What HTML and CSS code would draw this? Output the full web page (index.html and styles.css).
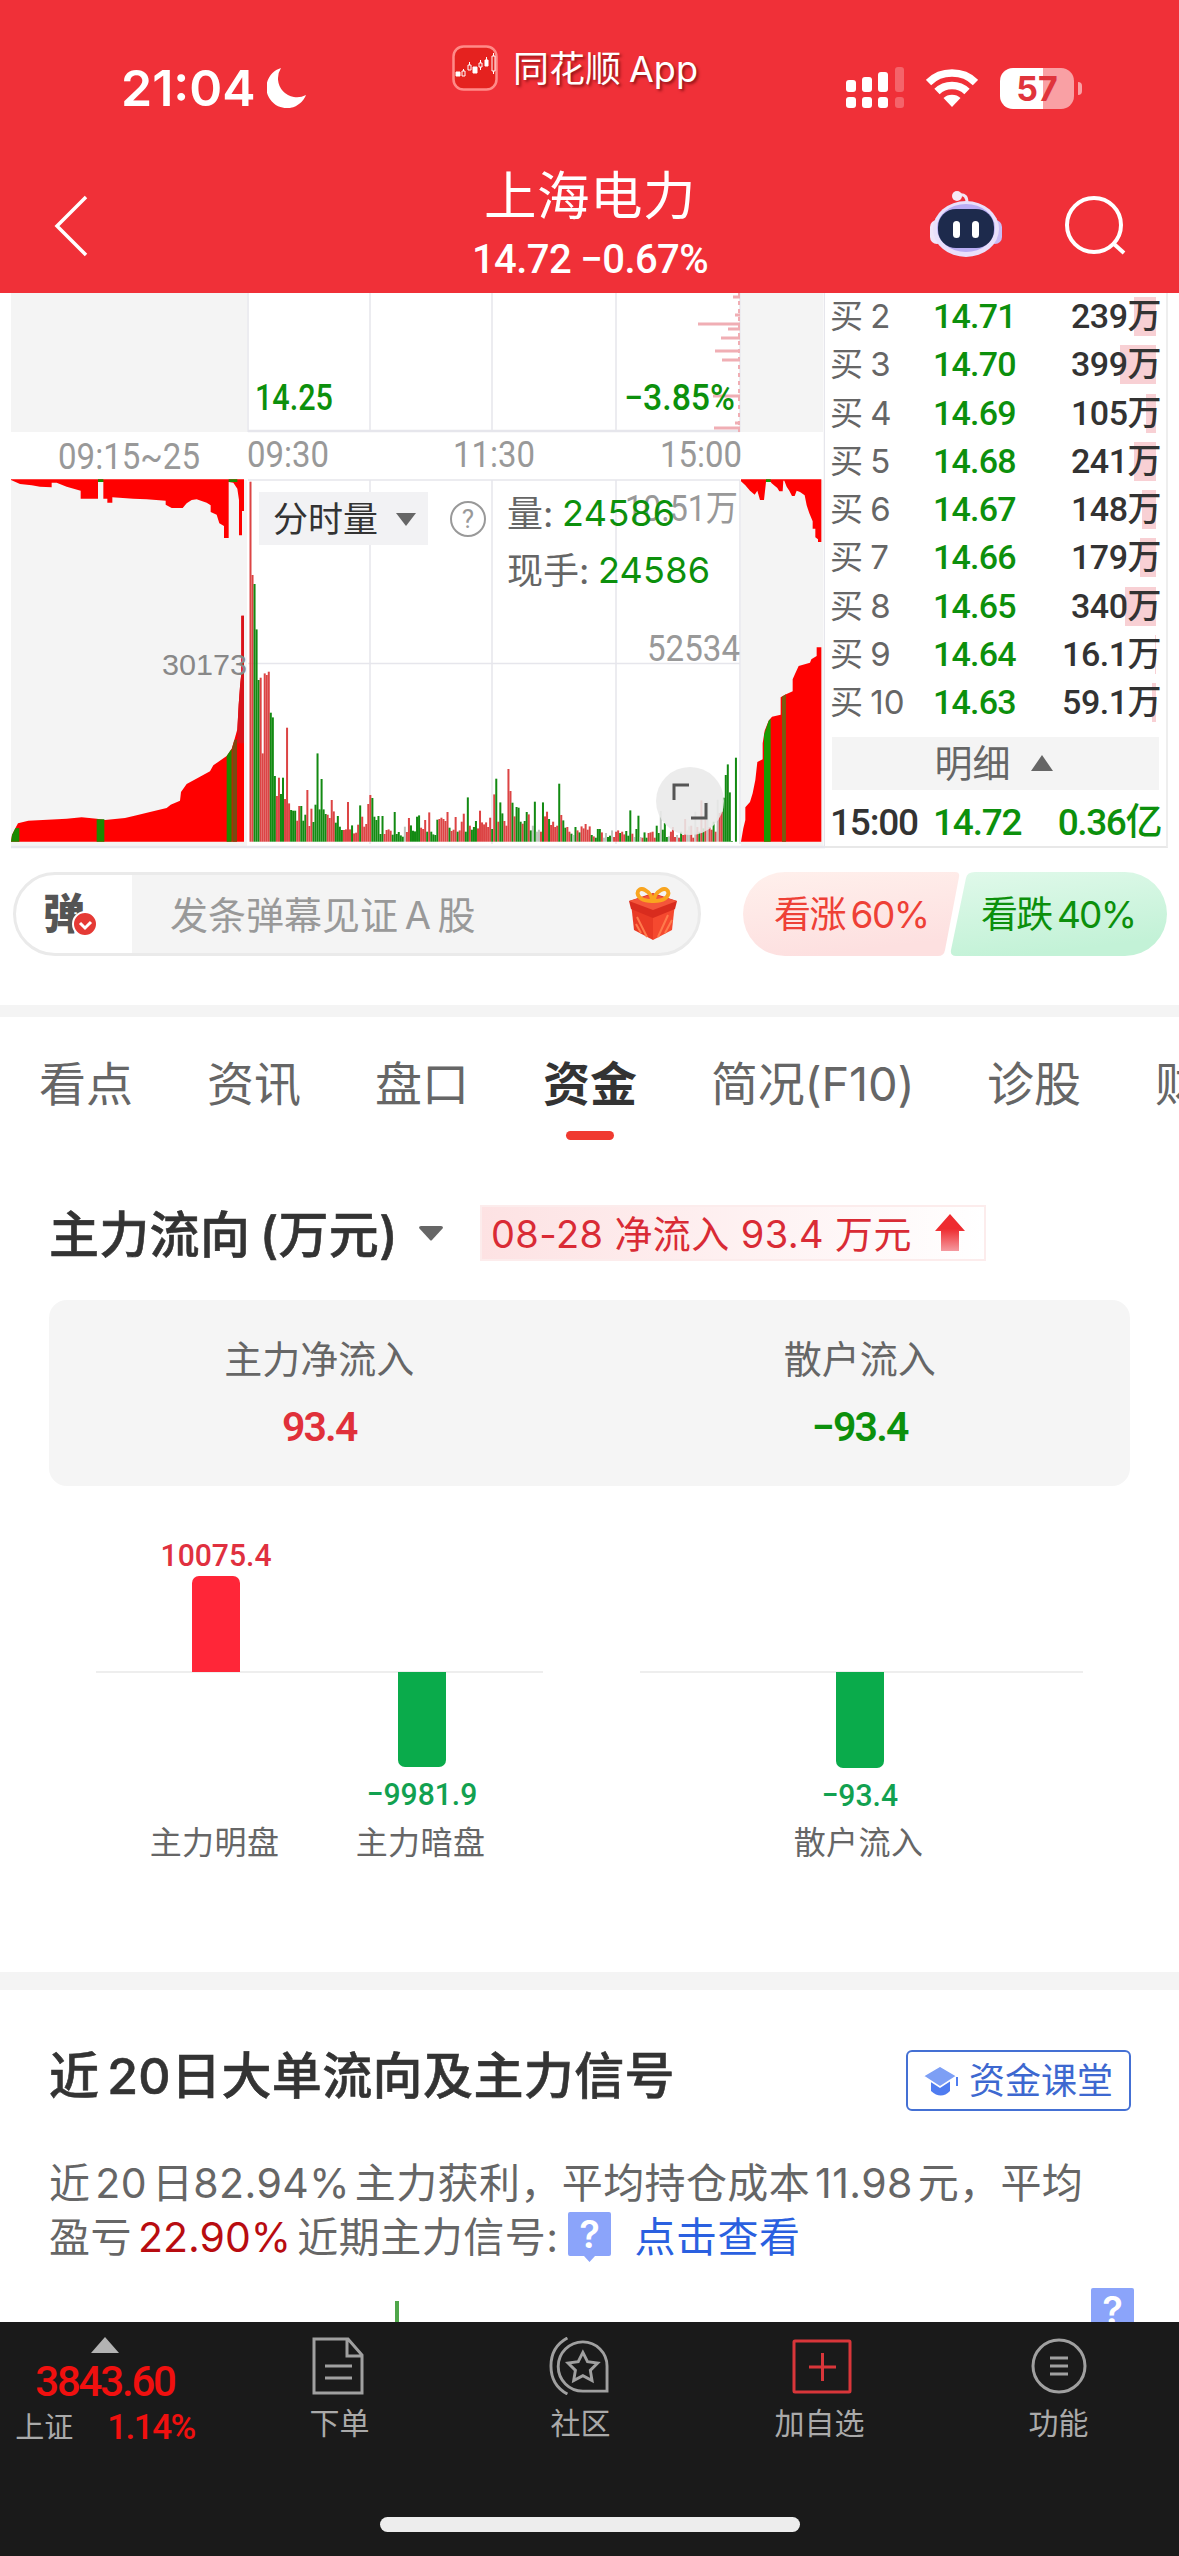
FILE: index.html
```html
<!DOCTYPE html>
<html lang="zh-CN">
<head>
    <meta charset="UTF-8">
    <meta name="viewport" content="width=1179">
    <title>上海电力</title>
    <link rel="stylesheet" href="styles.css">
</head>
<body>
    <header class="header">
        <div class="status">
            <div class="clock">
                <span>21:04</span>
                <svg width="40" height="40" viewBox="0 0 40 40"><path d="M14 0A20.500 20.500 0 1 0 39 27A19 19 0 0 1 14 0Z" fill="#fff"/></svg>
            </div>
            <div class="island">
                <svg width="46" height="46" viewBox="0 0 46 46">
                    <rect x="1.500" y="1.500" width="43" height="43" rx="10" fill="#e5221f" stroke="#ff8a88" stroke-width="2.500"/>
                    <g fill="#fff" stroke="#fff" stroke-width="1"><path d="M4 27h4v4h-4zM21 22h4v6h-4zM33 15h3v6h-3z"/><path d="M10 26h3v5h-3zM16 20h3v5h-3zM27 18h3v4h-3zM40 11h3v15h-3zM11.500 24v2M17.500 17v3M28.500 15v3M28.500 22v3M34.500 12v3M41.500 8v3M41.500 26v3" fill="none"/></g>
                </svg>
                <span>同花顺<i>App</i></span>
            </div>
            <div class="signals">
                <svg width="58" height="42" viewBox="0 0 58 42" fill="#fff">
                    <rect x="0" y="13" width="10" height="12" rx="3"/><rect x="16" y="10" width="10" height="15" rx="3"/><rect x="32" y="5" width="10" height="20" rx="3"/><rect x="49" y="0" width="9" height="25" rx="3" opacity=".25"/>
                    <rect x="0" y="30" width="10" height="11" rx="3"/><rect x="16" y="30" width="10" height="11" rx="3"/><rect x="32" y="30" width="10" height="11" rx="3"/><rect x="49" y="30" width="9" height="11" rx="3" opacity=".25"/>
                </svg>
                <svg width="52" height="38" viewBox="0 0 52 38" fill="none" stroke="#fff" stroke-width="7.500">
                    <path d="M2.500 13.500C15 .8 37 .8 49.500 13.500M11 22.500c8-8 22-8 30 0"/>
                    <path d="M26 38l-8.500-9c4-4.500 13-4.500 17 0z" fill="#fff" stroke="none"/>
                </svg>
                <div class="battery"><span>57</span></div>
            </div>
        </div>
        <div class="nav">
            <svg class="back" width="36" height="62" viewBox="0 0 36 62"><path d="M33 2L4 31l29 29" fill="none" stroke="#fff" stroke-width="3.500"/></svg>
            <div class="stock">
                <h1>上海电力</h1>
                <p>14.72 −0.67%</p>
            </div>
            <div class="tools">
                <svg width="74" height="68" viewBox="0 0 74 68">
                    <path d="M30 5c6-1 8 2 8 8" fill="none" stroke="#f3e4f4" stroke-width="3"/>
                    <circle cx="28" cy="6" r="5" fill="#f6e9f5"/>
                    <rect x="1" y="30" width="14" height="24" rx="7" fill="#f0e6fa"/><rect x="59" y="30" width="14" height="24" rx="7" fill="#c9bcf5"/>
                    <ellipse cx="37" cy="39" rx="33" ry="28" fill="#e9e0fb"/>
                    <ellipse cx="37" cy="38" rx="29" ry="24" fill="#b9adf3"/>
                    <rect x="9" y="19" width="56" height="39" rx="18" fill="#1d2a4c"/>
                    <rect x="24" y="31" width="7" height="17" rx="3.500" fill="#fff"/><rect x="43" y="31" width="7" height="17" rx="3.500" fill="#fff"/>
                </svg>
                <svg width="62" height="62" viewBox="0 0 62 62" fill="none" stroke="#fff" stroke-width="4"><circle cx="29" cy="30" r="27"/><path d="M49 49l10 9"/></svg>
            </div>
        </div>
    </header>

    <section class="quote">
        <svg class="chart" width="825" height="559" viewBox="0 293 825 559">
            <g fill="#f4f4f4"><path d="M11 293h236v139H11zM741 293h82v139h-82zM11 480h236v366H11zM741 480h82v366h-82z"/></g>
            <g stroke="#e6e6ec" stroke-width="1.500"><path d="M370 293v139M492 293v139M616 293v139M370 480v364M492 480v364M616 480v364M248 663.500h492M248 480h492M824.500 293v553M740 293v139M740 480v364M248 293v139"/><path d="M248 431h492M11 847h814" stroke-width="2.500"/></g>
            <!-- price distribution -->
            <g stroke="#f0aeb4" stroke-width="3"><path d="M733 297h7M735 315h5M698 324h42M728 329h12M721 338h19M715 351h25M722 360h18M713 396h27M735 423h5M714 428h26"/><path d="M739 293v139" stroke-width="2" stroke-dasharray="4 4"/></g>
            <g class="axis-price">
                <text x="255" y="410" textLength="78" lengthAdjust="spacingAndGlyphs">14.25</text>
                <text x="624" y="410" textLength="111" lengthAdjust="spacingAndGlyphs">−3.85%</text>
            </g>
            <g class="axis-time">
                <text x="58" y="469" textLength="142" lengthAdjust="spacingAndGlyphs">09:15~25</text>
                <text x="247" y="467" textLength="82" lengthAdjust="spacingAndGlyphs">09:30</text>
                <text x="453" y="467" textLength="82" lengthAdjust="spacingAndGlyphs">11:30</text>
                <text x="660" y="467" textLength="82" lengthAdjust="spacingAndGlyphs">15:00</text>
            </g>
            <!-- opening auction -->
            <g transform="translate(0 460) scale(.33333)">
                <path fill="#f00" d="M33 58H732V153H726V226H717V120L712 86L700 68L686 66V234H672V198L658 190L650 164L632 156V136L620 128L590 118L575 120L560 130L548 144H515L497 134V122L440 118L400 116L337 112V128H322V116H310V66H294V116H242V92L200 80L170 68H155V82L120 80L95 76L60 72L33 60Z"/>
                <path fill="#f00" d="M33 1145L36 1125L46 1105L54 1090L85 1082L200 1076L245 1072L290 1076L315 1080L375 1074L410 1066L450 1056L500 1044L512 1034L540 1022L543 996L560 972L600 950L630 934L640 916L680 888L695 866L703 840L712 808L716 735L720 680L724 640V467H732V1145Z"/>
                <path fill="#d8141c" d="M712 810L716 735L720 680L724 640V467H732V850H712Z"/>
                <path fill="#1a8a00" d="M33 1145L36 1125L46 1105L58 1104V1145ZM290 1078H313V1145H290ZM680 888L695 866V1145H680ZM294 58H310V66H294ZM686 58H712V66H686Z"/>
                <path fill="#7a4a10" d="M697 862L703 840L711 838V1145H697Z"/>
            </g>
            <text class="auction-vol" x="162" y="675" textLength="85" lengthAdjust="spacingAndGlyphs">30173</text>
            <g id="volume"></g>
            <!-- closing auction -->
            <g transform="translate(400 460) scale(.33333)">
                <path fill="#f00" d="M1023 58H1264V246H1254V238L1246 232V206H1238V184L1228 160L1220 136L1214 106L1200 96L1190 92L1184 108H1176L1168 92L1160 80L1153 62H1150L1148 94H1138L1132 84L1115 70L1112 66H1098L1092 120H1080L1072 92L1064 104L1050 92L1036 76L1023 64Z"/>
                <path fill="#f00" d="M1023 1145L1030 1105L1036 1080V1042L1050 1026L1058 1000L1066 960L1072 906L1088 898V850L1094 812L1106 782L1116 770L1142 764V712L1155 704L1178 694V658L1186 640L1196 618L1230 608L1234 598L1250 588V562H1264V1145Z"/>
                <path fill="#1a9a00" d="M1092 825L1106 782L1112 776V1145H1092ZM1098 58H1112V66H1098Z"/>
                <path fill="#7a5a10" d="M1146 710L1158 703V1145H1146Z"/>
            </g>
            <rect x="259" y="492" width="169" height="53" fill="#f2f2f4"/>
            <text class="picker" x="273" y="532">分时量</text>
            <path d="M396 513h20l-10 13z" fill="#666"/>
            <circle cx="468" cy="519" r="17" fill="none" stroke="#999" stroke-width="2"/>
            <text class="help" x="468" y="528">?</text>
            <g class="scale">
                <text x="625" y="521" textLength="113" lengthAdjust="spacingAndGlyphs">10.51万</text>
                <text x="647" y="661" textLength="93" lengthAdjust="spacingAndGlyphs">52534</text>
            </g>
            <g class="readout">
                <text x="507" y="527">量:</text><text x="562" y="526" class="down" textLength="113">24586</text>
                <text x="507" y="584">现手:</text><text x="598" y="583" class="down" textLength="112">24586</text>
            </g>
            <circle cx="690" cy="801" r="34" fill="#e9e9e9" opacity=".88"/>
            <path d="M674 800v-15h15M691 818h15v-15" fill="none" stroke="#555" stroke-width="3"/>
        </svg>

        <div class="book">
            <div class="row"><span>买 2</span><b>14.71</b><em>239万</em><i style="width:22px"></i></div>
            <div class="row"><span>买 3</span><b>14.70</b><em>399万</em><i style="width:36px"></i></div>
            <div class="row"><span>买 4</span><b>14.69</b><em>105万</em><i style="width:10px"></i></div>
            <div class="row"><span>买 5</span><b>14.68</b><em>241万</em><i style="width:22px"></i></div>
            <div class="row"><span>买 6</span><b>14.67</b><em>148万</em><i style="width:14px"></i></div>
            <div class="row"><span>买 7</span><b>14.66</b><em>179万</em><i style="width:16px"></i></div>
            <div class="row"><span>买 8</span><b>14.65</b><em>340万</em><i style="width:31px"></i></div>
            <div class="row"><span>买 9</span><b>14.64</b><em>16.1万</em><i style="width:1px"></i></div>
            <div class="row"><span>买 10</span><b>14.63</b><em>59.1万</em><i style="width:4px"></i></div>
            <div class="detail">明细 <svg width="22" height="16" viewBox="0 0 22 16"><path d="M0 16L11 0l11 16z" fill="#666"/></svg></div>
            <div class="row last"><span>15:00</span><b>14.72</b><em>0.36亿</em></div>
        </div>
    </section>

    <section class="danmu">
        <div class="send">
            <div class="send-icon"><span>弹</span>
                <svg class="check" width="26" height="26" viewBox="0 0 26 26"><circle cx="13" cy="13" r="12" fill="#e53a35" stroke="#fff" stroke-width="2"/><path d="M8 12l5 5 6-6" fill="none" stroke="#fff" stroke-width="3"/></svg>
            </div>
            <div class="send-text">发条弹幕见证 A 股</div>
            <svg class="gift" width="50" height="54" viewBox="0 0 50 54">
                <path d="M3 16l22 8v29L6 43z" fill="#e93a25"/><path d="M47 16l-22 8v29l19-10z" fill="#f5492f"/>
                <path d="M1 14l24-8 24 8-2 8-22 9L3 22z" fill="#d92c1e"/><path d="M1 14l24-7 24 7-24 9z" fill="#f4553a"/>
                <path d="M9 30l10 20M8 37l5 9M40 28L30 50M44 33l-7 13" stroke="#ff7a4c" stroke-width="2"/>
                <path d="M24 14C4 14 8-2 17 3c6 3 7 9 7 11zM26 14c20 0 16-16 7-11-6 3-7 9-7 11z" fill="none" stroke="#f9a51f" stroke-width="4"/>
            </svg>
        </div>
        <div class="vote">
            <svg width="424" height="84" viewBox="0 0 424 84">
                <defs>
                    <linearGradient id="up" x1="0" y1="0" x2=".3" y2="1"><stop offset="0" stop-color="#fff0ec"/><stop offset="1" stop-color="#fde0e0"/></linearGradient>
                    <linearGradient id="dn" x1="0" y1="0" x2=".3" y2="1"><stop offset="0" stop-color="#e0f9ea"/><stop offset="1" stop-color="#c3f2d7"/></linearGradient>
                </defs>
                <path d="M42 0H212q5 0 4 5L202 78q-1 6-7 6H42A42 42 0 0 1 42 0Z" fill="url(#up)"/>
                <path d="M232 0H382a42 42 0 0 1 0 84H213q-6 0-5-6L223 6q1-6 9-6Z" fill="url(#dn)"/>
                <text x="31" y="56" textLength="156" fill="#ee4036">看涨 60%</text>
                <text x="238" y="56" textLength="156" fill="#0c900c">看跌 40%</text>
            </svg>
        </div>
    </section>

    <nav class="tabs">
        <a>看点</a><a>资讯</a><a>盘口</a><a class="active">资金</a><a class="f10">简况(F10)</a><a>诊股</a><a>财务</a>
    </nav>

    <section class="flow">
        <div class="flow-head">
            <h2>主力流向 (万元)</h2>
            <svg class="caret" width="24" height="15" viewBox="0 0 24 15"><path d="M0 2q0-2 2-2h20q2 0 2 2L13 14q-1 1-2 0z" fill="#666"/></svg>
            <div class="tag">
                <span>08-28 净流入 93.4 万元</span>
                <svg width="32" height="38" viewBox="0 0 32 38"><defs><linearGradient id="ar" x1="0" y1="0" x2="0" y2="1"><stop offset=".4" stop-color="#ee2b2f"/><stop offset="1" stop-color="#f59aa0"/></linearGradient></defs><path d="M16 0l15 17h-6v20H7V17H1z" fill="url(#ar)"/></svg>
            </div>
        </div>
        <div class="summary">
            <div><p>主力净流入</p><b class="red">93.4</b></div>
            <div><p>散户流入</p><b class="green">−93.4</b></div>
        </div>
        <div class="bars">
            <div class="group main">
                <div class="col up"><div class="half"><b>10075.4</b><i style="height:96px"></i></div><div class="half"></div><p>主力明盘</p></div>
                <div class="col dn"><div class="half"></div><div class="half"><i style="height:95px"></i><b>−9981.9</b></div><p>主力暗盘</p></div>
            </div>
            <div class="group retail">
                <div class="col dn"><div class="half"></div><div class="half"><i style="height:96px"></i><b>−93.4</b></div><p>散户流入</p></div>
            </div>
        </div>
    </section>

    <section class="signal">
        <div class="signal-head">
            <h2>近 20日大单流向及主力信号</h2>
            <a class="lesson">
                <svg width="36" height="32" viewBox="0 0 36 32"><path d="M8 15v11q10 9 19 0V15z" fill="#4f7cf0"/><path d="M0 11L17 1l17 10-17 11z" fill="#7d9ff5" stroke="#fff" stroke-width="1.500"/><path d="M34 12v9" stroke="#4f7cf0" stroke-width="2"/></svg>
                资金课堂
            </a>
        </div>
        <p class="para first">近 20 日82.94% 主力获利，平均持仓成本 11.98 元，平均</p>
        <p class="para second">盈亏 <span class="dark-red">22.90%</span> 近期主力信号:<svg class="bubble" width="43" height="50" viewBox="0 0 43 50"><path d="M2 0h39q2 0 2 2v40q0 2-2 2H27l-5.500 6-5.500-6H2q-2 0-2-2V2q0-2 2-2z" fill="#8ba4fa"/><text x="21.500" y="36">?</text></svg><a>点击查看</a></p>
        <div class="plot">
            <i></i>
            <svg class="bubble" width="43" height="50" viewBox="0 0 43 50"><path d="M2 0h39q2 0 2 2v48H0V2q0-2 2-2z" fill="#8ba4fa"/><text x="21.500" y="36">?</text></svg>
        </div>
    </section>

    <footer class="bottom">
        <div class="menu">
            <div class="index">
                <svg width="28" height="16" viewBox="0 0 28 16"><path d="M0 16L14 0l14 16z" fill="#b3b3b3"/></svg>
                <b>3843.60</b>
                <p><span>上证</span><em>1.14%</em></p>
            </div>
            <div class="item doc">
                <svg width="54" height="58" viewBox="0 0 54 58" fill="none" stroke="#a0a0a0" stroke-width="3"><path d="M3 2h34l14 16v38H3zM36 2v17h15M14 29h27M14 41h27"/></svg>
                <span>下单</span>
            </div>
            <div class="item club">
                <svg width="62" height="60" viewBox="0 0 62 60" fill="none" stroke="#a0a0a0" stroke-width="3"><path d="M35 5a25.500 25.500 0 1 0 0 51H60V30A25 25 0 0 0 35 5ZM19 1Q2 10 2 30T19 59"/><path d="M35 16l4.800 9.500 10.500 1.500-7.600 7.500 1.800 10.500-9.500-5-9.500 5 1.800-10.500-7.600-7.500 10.500-1.500z"/></svg>
                <span>社区</span>
            </div>
            <div class="item add">
                <svg width="60" height="58" viewBox="0 0 60 58" fill="none" stroke="#d9363a" stroke-width="3"><rect x="2" y="4" width="56" height="51" rx="1"/><path d="M17 30h27M30.500 16v28"/></svg>
                <span>加自选</span>
            </div>
            <div class="item">
                <svg width="58" height="58" viewBox="0 0 58 58" fill="none" stroke="#a0a0a0" stroke-width="3"><circle cx="29" cy="29" r="26"/><path d="M20 21h18M20 29h18M20 37h18"/></svg>
                <span>功能</span>
            </div>
        </div>
        <div class="home"></div>
    </footer>
    <script src="script.js"></script>
</body>
</html>
```

FILE: styles.css
```css
* {
    box-sizing: border-box;
}
body {
    margin: 0;
    width: 1179px;
    height: 2556px;
    overflow: hidden;
    background-color: #FFFFFF;
    color: #333333;
    font-family: Inter, "Noto Sans CJK SC", sans-serif;
    display: flex;
    flex-direction: column;
}
h1, h2, p {
    margin: 0;
    font-weight: 400;
}
i, em {
    font-style: normal;
}
svg {
    display: block;
    flex-shrink: 0;
}
.header {
    height: 293px;
    flex-shrink: 0;
    background-color: #F03038;
    color: #FFFFFF;
}
.status {
    height: 150px;
    padding: 0 98px 0 121px;
    display: grid;
    grid-template-columns: 331px 1fr 235px;
}
.clock {
    display: flex;
    align-items: center;
    height: 176px;
    gap: 11px;
    font-size: 50px;
    font-weight: 600;
}
.island {
    display: flex;
    align-items: center;
    height: 136px;
    gap: 15px;
    font-size: 36px;
    font-weight: 400;
    text-shadow: 2px 2px 3px rgba(80, 0, 0, 0.6);
}
.island span {
    padding-bottom: 4px;
}
.island i {
    margin-left: 8px;
}
.signals {
    display: flex;
    align-items: center;
    height: 176px;
    gap: 22px;
}
.battery {
    width: 74px;
    height: 41px;
    border-radius: 13px;
    background: linear-gradient(90deg, #FFFFFF 58%, #F9A0A4 58%);
    color: #E0343C;
    font-size: 34px;
    font-weight: 700;
    line-height: 41px;
    text-align: center;
    position: relative;
}
.battery::after {
    content: "";
    position: absolute;
    right: -8px;
    top: 14px;
    width: 4px;
    height: 13px;
    border-radius: 0 4px 4px 0;
    background-color: #F9A0A4;
}
.nav {
    height: 143px;
    padding: 0 52px 0 53px;
    display: grid;
    grid-template-columns: 300px 1fr 300px;
}
.back {
    margin-top: 45px;
}
.stock {
    text-align: center;
}
.stock h1 {
    font-size: 52.5px;
    line-height: 60px;
    padding-top: 16px;
    letter-spacing: 0.5px;
}
.stock p {
    font-family: Roboto, sans-serif;
    font-size: 40px;
    font-weight: 500;
    line-height: 44px;
    margin-top: 12px;
    letter-spacing: -0.6px;
}
.tools {
    display: flex;
    justify-content: flex-end;
    align-items: flex-start;
    padding-top: 40px;
    gap: 62px;
}
.tools svg + svg {
    margin-top: 5px;
}
.quote {
    height: 559px;
    flex-shrink: 0;
    display: flex;
}
.chart text {
    font-family: Roboto, "Noto Sans CJK SC", sans-serif;
}
.axis-price text {
    font-size: 36px;
    font-weight: 500;
    fill: #0C900C;
}
.axis-time text {
    font-size: 36px;
    fill: #999999;
}
.chart .auction-vol {
    font-family: "Liberation Sans", sans-serif;
    font-size: 29px;
    fill: #888888;
}
.chart .picker {
    font-size: 35px;
    fill: #333333;
}
.chart .help {
    font-size: 26px;
    fill: #999999;
    text-anchor: middle;
}
.scale text {
    font-size: 36px;
    fill: #999999;
}
.chart .readout text {
    font-family: Inter, "Noto Sans CJK SC", sans-serif;
    font-size: 36px;
    fill: #666666;
}
.chart .readout .down {
    fill: #0C900C;
}
.book {
    width: 343px;
    height: 555px;
    padding: 0 7px;
    border-right: 2px solid #EEEEEE;
    border-bottom: 2px solid #E8E8E8;
    font-size: 34px;
    line-height: 46px;
}
.row {
    height: 48.3px;
    display: grid;
    grid-template-columns: 101px 105px 1fr;
    white-space: nowrap;
    position: relative;
}
.row span {
    color: #666666;
    word-spacing: -2px;
    font-size: 33px;
    margin-left: -2px;
}
.row b {
    font-family: Roboto, sans-serif;
    font-weight: 500;
    color: #0C900C;
    letter-spacing: -0.8px;
}
.row em {
    font-family: Roboto, "Noto Sans CJK SC", sans-serif;
    font-weight: 500;
    text-align: right;
    font-size: 34px;
    letter-spacing: -0.5px;
    position: relative;
    z-index: 1;
    margin-right: -2px;
}
.row i {
    position: absolute;
    right: 3px;
    top: 4px;
    height: 39px;
    background-color: #F8D0D4;
}
.detail {
    margin-top: 9px;
    height: 53px;
    background-color: #F4F4F4;
    color: #666666;
    font-size: 38px;
    display: flex;
    align-items: center;
    justify-content: center;
    gap: 20px;
    padding-right: 4px;
}
.last {
    margin-top: 10px;
}
.last span, .last b, .last em {
    font-family: Roboto, "Noto Sans CJK SC", sans-serif;
    font-size: 37px;
}
.last span {
    color: #333333;
    font-weight: 500;
    letter-spacing: -1.2px;
}
.last b {
    letter-spacing: -1.2px;
}
.last em {
    color: #0C900C;
    letter-spacing: -1.4px;
}
.danmu {
    height: 153px;
    flex-shrink: 0;
    padding: 20px 12px 0 13px;
    display: flex;
    justify-content: space-between;
}
.send {
    width: 688px;
    height: 84px;
    border: 3px solid #EAEAEA;
    border-radius: 42px;
    background: linear-gradient(90deg, #FFFFFF 116px, #F4F4F4 116px);
    display: flex;
    align-items: center;
}
.send-icon {
    width: 116px;
    padding: 0 0 8px 27px;
    font-size: 42px;
    font-weight: 900;
    color: #555555;
    position: relative;
}
.check {
    position: absolute;
    left: 56px;
    top: 31px;
}
.send-text {
    flex-grow: 1;
    padding: 0 0 3px 38px;
    font-size: 38px;
    color: #999999;
    word-spacing: -4px;
}
.gift {
    margin-right: 20px;
}
.vote text {
    font-size: 37px;
    word-spacing: -3px;
}
.tabs {
    height: 178px;
    flex-shrink: 0;
    border-top: 12px solid #F4F4F4;
    padding: 33px 0 0 39px;
    display: flex;
    gap: 74px;
    white-space: nowrap;
    overflow: hidden;
}
.tabs a {
    font-size: 47px;
    line-height: 68px;
    color: #666666;
    flex-shrink: 0;
}
.tabs .f10 {
    width: 202px;
    letter-spacing: -0.2px;
}
.tabs .active {
    font-weight: 700;
    color: #333333;
}
.tabs .active::after {
    content: "";
    display: block;
    width: 48px;
    height: 9px;
    margin: 13px auto 0;
    border-radius: 5px;
    background-color: #F03A30;
}
.flow {
    height: 789px;
    flex-shrink: 0;
    padding: 22px 49px 0;
}
.flow-head {
    display: flex;
    align-items: center;
    height: 56px;
}
h2 {
    font-size: 50px;
    font-weight: 500;
    white-space: nowrap;
    -webkit-text-stroke: 0.6px #333333;
}
.flow-head h2 {
    width: 370px;
    word-spacing: -4px;
    letter-spacing: 0.3px;
    padding-bottom: 4px;
}
.tag {
    margin-left: 37px;
    width: 506px;
    height: 56px;
    padding: 0 18px 0 9px;
    border: 2px solid #FCECEC;
    background: linear-gradient(90deg, #FDE2E3, #FFFFFF);
    display: flex;
    align-items: center;
    justify-content: space-between;
    font-size: 38px;
    letter-spacing: 0.4px;
    color: #D92B35;
    white-space: nowrap;
}
.tag span {
    padding-bottom: 4px;
}
.summary {
    margin-top: 39px;
    height: 186px;
    border-radius: 18px;
    background-color: #F5F5F5;
    display: grid;
    grid-template-columns: 1fr 1fr;
    text-align: center;
}
.summary p {
    margin-top: 31px;
    font-size: 38px;
    line-height: 56px;
    color: #666666;
}
.summary b {
    display: block;
    margin-top: 15px;
    font-family: Roboto, sans-serif;
    font-size: 41px;
    font-weight: 600;
    line-height: 50px;
    letter-spacing: -1.8px;
}
.red {
    color: #E0303A;
}
.green {
    color: #0C900C;
}
.bars {
    display: flex;
    padding: 50px 47px 0;
    justify-content: space-between;
}
.group {
    height: 330px;
    display: flex;
    background: linear-gradient(#EEEEEE, #EEEEEE) 0 135px / 100% 2px no-repeat;
}
.main {
    width: 447px;
    padding-left: 17px;
}
.retail {
    width: 443px;
    justify-content: center;
    padding-right: 3px;
}
.col {
    width: 206px;
    text-align: center;
}
.half {
    height: 136px;
    display: flex;
    flex-direction: column;
    align-items: center;
}
.up .half {
    justify-content: flex-end;
}
.half i {
    width: 48px;
    flex-shrink: 0;
    border-radius: 0 0 7px 7px;
    background-color: #0AAB4B;
}
.up .half i {
    border-radius: 7px 7px 0 0;
    background-color: #FF2638;
}
.half b {
    font-family: Roboto, sans-serif;
    font-size: 32px;
    font-weight: 500;
    line-height: 42px;
    color: #12A150;
    transform: scaleX(0.94);
}
.up .half b {
    color: #E0303F;
}
.dn .half b {
    margin-top: 6px;
}
.col p {
    font-size: 32px;
    line-height: 44px;
    margin: 13px 3px 0 0;
    letter-spacing: 0.4px;
    color: #666666;
}
.signal {
    height: 350px;
    flex-shrink: 0;
    border-top: 18px solid #F4F4F4;
    padding: 60px 48px 0 49px;
}
.signal-head {
    display: flex;
    justify-content: space-between;
    height: 60px;
    line-height: 52px;
}
.signal-head h2 {
    word-spacing: -6px;
    letter-spacing: 0.4px;
}
.lesson {
    width: 225px;
    height: 61px;
    border: 2px solid #4470D4;
    border-radius: 6px;
    padding-left: 15px;
    display: flex;
    align-items: center;
    gap: 10px;
    font-size: 36px;
    color: #3D68D0;
}
.para {
    font-size: 41px;
    line-height: 54px;
    color: #666666;
    display: flex;
    white-space: pre;
}
.first {
    margin-top: 46px;
    word-spacing: -7px;
    letter-spacing: 0.4px;
}
.second {
    word-spacing: -6px;
    letter-spacing: 0.5px;
}
.dark-red {
    color: #B80C10;
    letter-spacing: 0;
}
.para a {
    color: #2A60E0;
    margin-left: 23px;
}
.para .bubble {
    margin: 2px 0 0 10px;
}
.bubble text {
    font-size: 38px;
    font-weight: 600;
    letter-spacing: 0;
    fill: #FFFFFF;
    text-anchor: middle;
}
.plot {
    margin-top: 24px;
    height: 34px;
    padding-left: 346px;
    display: flex;
    justify-content: space-between;
    overflow: hidden;
    margin-right: -3px;
}
.plot i {
    width: 4px;
    margin-top: 13px;
    background-color: #4FA64A;
}
.bottom {
    height: 234px;
    flex-shrink: 0;
    background-color: #1A1A1A;
    color: #AAAAAA;
    position: relative;
    z-index: 1;
}
.menu {
    height: 195px;
    padding-top: 15px;
    display: grid;
    grid-template-columns: 222px repeat(4, 239px);
}
.index {
    display: flex;
    flex-direction: column;
    align-items: center;
    width: 210px;
}
.index b {
    font-family: Roboto, sans-serif;
    font-size: 42px;
    font-weight: 500;
    line-height: 48px;
    margin-top: 5px;
    color: #F0100F;
    letter-spacing: -2.2px;
}
.index p {
    display: flex;
    align-items: center;
    gap: 34px;
    font-size: 29px;
    line-height: 44px;
}
.index em {
    font-family: Roboto, sans-serif;
    font-size: 35px;
    font-weight: 500;
    color: #F0100F;
    letter-spacing: -1.5px;
}
.item {
    display: flex;
    flex-direction: column;
    align-items: center;
    font-size: 30px;
    line-height: 40px;
    gap: 8px;
}
.item svg {
    height: 58px;
}
.doc {
    padding-right: 4px;
}
.doc svg {
    margin-right: 4px;
}
.club svg {
    margin-right: 4px;
}
.add svg {
    margin-left: 4px;
}
.home {
    width: 420px;
    height: 15px;
    margin: 0 auto;
    border-radius: 8px;
    background-color: #EDEDED;
}
```

FILE: script.js
```js
// one entry per trading minute: r = up, g = down, x = flat
var volumes = 'r1080 r800 g773 g637 g485 r492 r265 r505 r500 r510 g387 g373 g197 r137 r192 g143 g192 r128 r342 r115 ' +
    'g95 g93 g93 r63 r107 g107 g63 g81 r155 r47 r99 g59 g111 g265 g97 g188 g97 g83 r81 r71 ' +
    'r125 r91 g57 g77 g45 g35 r35 r37 r119 r37 g49 r25 r27 r51 g109 r75 r45 r53 r113 r140 ' +
    'g131 g75 g65 g77 g23 g77 r23 r35 r37 r33 g21 g89 g23 g29 g19 g15 x45 r29 r71 g49 ' +
    'g33 g31 g75 g79 r42 r38 r65 g30 r88 g30 g22 g20 g66 r68 r72 r68 r62 r89 g42 r32 ' +
    'r36 r74 g30 r34 r60 r84 g30 g133 r48 g36 g44 g62 r40 r93 r58 r52 r58 r44 r72 g38 ' +
    'r142 g189 r60 g118 g85 r62 r48 r218 r152 g117 r76 g104 g102 g60 r54 g62 g89 r82 g34 x48 ' +
    'g120 x30 x36 r30 g118 r76 r90 g68 r50 r60 r44 r48 g174 r80 g64 g42 r44 r30 g24 x20 ' +
    'g44 r34 g28 r46 r40 r53 r36 r46 g20 r16 g12 g38 g38 r28 x12 x26 g14 g18 x34 r14 ' +
    'r30 r34 g26 r30 r22 g32 g18 g94 r24 x14 g38 g78 x14 r12 g28 g12 r26 r28 r30 r12 ' +
    'g48 g26 x92 g36 g56 g14 x16 r30 r44 r14 x20 r12 g30 r20 r68 x34 x46 r48 r12 x90 ' +
    'r44 g30 r124 g40 r80 x120 r44 r36 g60 r30 x126 r86 r90 g132 g200 g232 g148 g2 x0 g252';

var colors = { r: '#dc4444', g: '#128a12', x: '#bcc4bc' };
var left = 249.5;
var bottom = 841.7;
var step = (739 - left) / 241;

var shapes = volumes.split(' ').map(function(item, i) {
    var h = parseInt(item.slice(1)) / 3;
    return '<rect x="' + (left + i * step).toFixed(2) + '" y="' + (bottom - h).toFixed(1) +
        '" width="2" height="' + h.toFixed(1) + '" fill="' + colors[item[0]] + '"/>';
});
document.getElementById('volume').innerHTML = shapes.join('');
```
